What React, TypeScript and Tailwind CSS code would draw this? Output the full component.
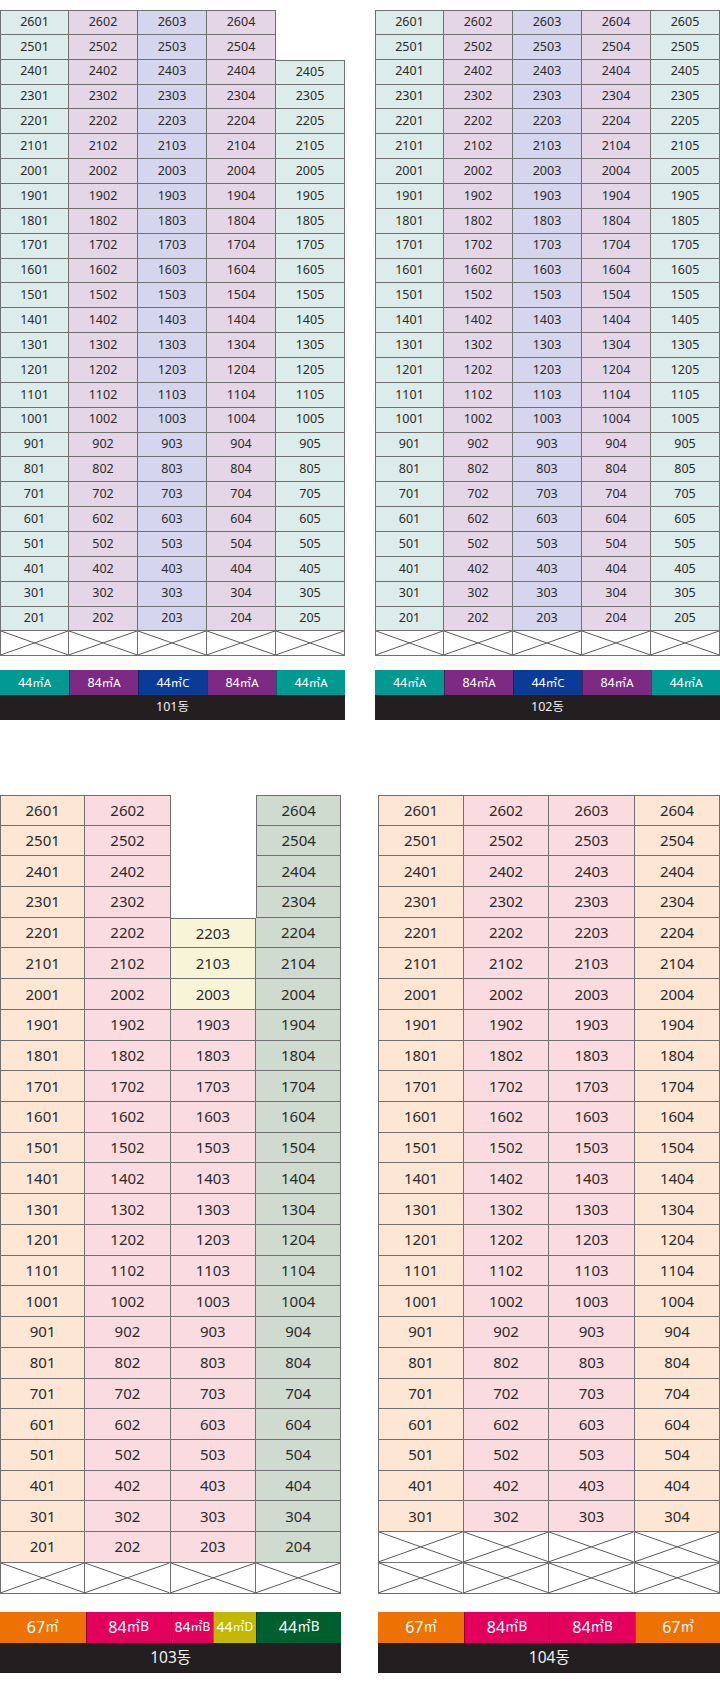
import React from "react";

type CellSpec = {
  label?: string;
  bg?: string;
  empty?: boolean;
  piloti?: boolean;
  bt?: boolean;
  bl?: boolean;
};

const BORDER = "border-[#707070]";

function Piloti() {
  return (
    <svg className="block h-full w-full" viewBox="0 0 100 100" preserveAspectRatio="none">
      <line x1="0" y1="0" x2="100" y2="100" stroke="#5a5a5a" strokeWidth="1" vectorEffect="non-scaling-stroke" />
      <line x1="0" y1="100" x2="100" y2="0" stroke="#5a5a5a" strokeWidth="1" vectorEffect="non-scaling-stroke" />
    </svg>
  );
}

function Cell({ c, big }: { c: CellSpec; big: boolean }) {
  if (c.empty) return <div />;
  const cls = [
    "flex items-center justify-center border-r border-b",
    BORDER,
    c.bt ? "border-t" : "",
    c.bl ? "border-l" : "",
    big ? "text-[15px]" : "text-[12.5px]",
    "text-[#2b2b2b] leading-none",
  ].join(" ");
  return (
    <div className={cls} style={{ backgroundColor: c.piloti ? "#ffffff" : c.bg }}>
      {c.piloti ? <Piloti /> : c.label}
    </div>
  );
}

function Grid({ rows, cols, rowH, colW, big }: { rows: CellSpec[][]; cols: number; rowH: string; colW: string; big: boolean }) {
  return (
    <div
      className="grid"
      style={{
        gridTemplateColumns: `repeat(${cols}, ${colW})`,
        gridAutoRows: rowH,
      }}
    >
      {rows.flatMap((r, i) => r.map((c, j) => <Cell key={`${i}-${j}`} c={c} big={big} />))}
    </div>
  );
}

type Leg = { text: string; unit: string; bg: string; w: string; small?: boolean };

function Legend({ items, name, big }: { items: Leg[]; name: string; big: boolean }) {
  return (
    <div className="flex flex-col">
      <div className={`flex ${big ? "h-[31px]" : "h-[25px]"}`}>
        {items.map((it, i) => (
          <div
            key={i}
            className={`flex items-center justify-center text-white leading-none ${i > 0 ? "border-l border-[#00000055]" : ""}`}
            style={{ backgroundColor: it.bg, width: it.w }}
          >
            <span className={big ? (it.small ? "text-[14px]" : "text-[16px]") : "text-[12.5px]"}>{it.text}</span>
            <span className={big ? (it.small ? "text-[12px]" : "text-[13.5px]") : "text-[11.5px]"}>{it.unit}</span>
          </div>
        ))}
      </div>
      <div
        className={`flex items-center justify-center bg-[#231f20] text-[#f0f0f0] leading-none ${
          big ? "h-[30.5px] text-[15.5px]" : "h-[24.5px] text-[12.5px]"
        }`}
      >
        {name}
      </div>
    </div>
  );
}

const TEAL = "#dcecea";
const PURP = "#e4d5e7";
const LAV = "#d5d5ed";
const PEACH = "#fde6d3";
const PINK = "#fadbe0";
const CREAM = "#f7f4d8";
const SAGE = "#cfdbcf";

const floors = (from: number, to: number) => {
  const a: number[] = [];
  for (let f = from; f >= to; f--) a.push(f);
  return a;
};

const topColor = (u: number) => (u === 1 || u === 5 ? TEAL : u === 3 ? LAV : PURP);

function build101(): CellSpec[][] {
  const rows: CellSpec[][] = floors(26, 2).map((f, i) =>
    [1, 2, 3, 4, 5].map((u) => {
      if (u === 5 && f > 24) return { empty: true };
      return {
        label: `${f}0${u}`,
        bg: topColor(u),
        bt: i === 0 || (u === 5 && f === 24),
        bl: u === 1,
      };
    })
  );
  rows.push([1, 2, 3, 4, 5].map((u) => ({ piloti: true, bl: u === 1 })));
  return rows;
}

function build102(): CellSpec[][] {
  const rows: CellSpec[][] = floors(26, 2).map((f, i) =>
    [1, 2, 3, 4, 5].map((u) => ({ label: `${f}0${u}`, bg: topColor(u), bt: i === 0, bl: u === 1 }))
  );
  rows.push([1, 2, 3, 4, 5].map((u) => ({ piloti: true, bl: u === 1 })));
  return rows;
}

function build103(): CellSpec[][] {
  const rows: CellSpec[][] = floors(26, 2).map((f, i) =>
    [1, 2, 3, 4].map((u) => {
      if (u === 3 && f > 22) return { empty: true };
      let bg = PINK;
      if (u === 1) bg = PEACH;
      else if (u === 4) bg = SAGE;
      else if (u === 3 && f >= 20) bg = CREAM;
      return {
        label: `${f}0${u}`,
        bg,
        bt: i === 0 || (u === 3 && f === 22),
        bl: u === 1 || (u === 4 && f > 22),
      };
    })
  );
  rows.push([1, 2, 3, 4].map((u) => ({ piloti: true, bl: u === 1 })));
  return rows;
}

function build104(): CellSpec[][] {
  const rows: CellSpec[][] = floors(26, 3).map((f, i) =>
    [1, 2, 3, 4].map((u) => ({
      label: `${f}0${u}`,
      bg: u === 1 || u === 4 ? PEACH : PINK,
      bt: i === 0,
      bl: u === 1,
    }))
  );
  rows.push([1, 2, 3, 4].map((u) => ({ piloti: true, bl: u === 1 })));
  rows.push([1, 2, 3, 4].map((u) => ({ piloti: true, bl: u === 1 })));
  return rows;
}

const T_TEAL = "#009a92";
const T_PURP = "#7d2a82";
const T_BLUE = "#0b3b97";
const ORANGE = "#ee7203";
const MAGENTA = "#e3005d";
const OLIVE = "#c3b700";
const GREEN = "#005f2f";

export default function App() {
  const topLegend: Leg[] = [
    { text: "44", unit: "㎡A", bg: T_TEAL, w: "69px" },
    { text: "84", unit: "㎡A", bg: T_PURP, w: "69px" },
    { text: "44", unit: "㎡C", bg: T_BLUE, w: "69px" },
    { text: "84", unit: "㎡A", bg: T_PURP, w: "69px" },
    { text: "44", unit: "㎡A", bg: T_TEAL, w: "69px" },
  ];
  const leg103: Leg[] = [
    { text: "67", unit: "㎡", bg: ORANGE, w: "85.5px" },
    { text: "84", unit: "㎡B", bg: MAGENTA, w: "85.3px" },
    { text: "84", unit: "㎡B", bg: MAGENTA, w: "42px", small: true },
    { text: "44", unit: "㎡D", bg: OLIVE, w: "43.2px", small: true },
    { text: "44", unit: "㎡B", bg: GREEN, w: "85.3px" },
  ];
  const leg104: Leg[] = [
    { text: "67", unit: "㎡", bg: ORANGE, w: "85.5px" },
    { text: "84", unit: "㎡B", bg: MAGENTA, w: "85.5px" },
    { text: "84", unit: "㎡B", bg: MAGENTA, w: "85.5px" },
    { text: "67", unit: "㎡", bg: ORANGE, w: "85.5px" },
  ];

  return (
    <div
      className="flex h-[1697px] w-[720px] flex-col bg-white pt-[10px]"
      style={{ fontFamily: '"Noto Sans", "Noto Sans CJK KR", sans-serif' }}
    >
      <div className="flex gap-[30px]">
        <div className="flex w-[345px] flex-col gap-[14px]">
          <Grid rows={build101()} cols={5} rowH="24.87px" colW="69px" big={false} />
          <Legend items={topLegend} name="101동" big={false} />
        </div>
        <div className="flex w-[345px] flex-col gap-[14px]">
          <Grid rows={build102()} cols={5} rowH="24.87px" colW="69px" big={false} />
          <Legend items={topLegend} name="102동" big={false} />
        </div>
      </div>
      <div className="mt-[75px] flex gap-[37px]">
        <div className="flex w-[341.3px] flex-col gap-[18px]">
          <Grid rows={build103()} cols={4} rowH="30.73px" colW="85.33px" big={true} />
          <Legend items={leg103} name="103동" big={true} />
        </div>
        <div className="flex w-[342px] flex-col gap-[18px]">
          <Grid rows={build104()} cols={4} rowH="30.73px" colW="85.5px" big={true} />
          <Legend items={leg104} name="104동" big={true} />
        </div>
      </div>
    </div>
  );
}
